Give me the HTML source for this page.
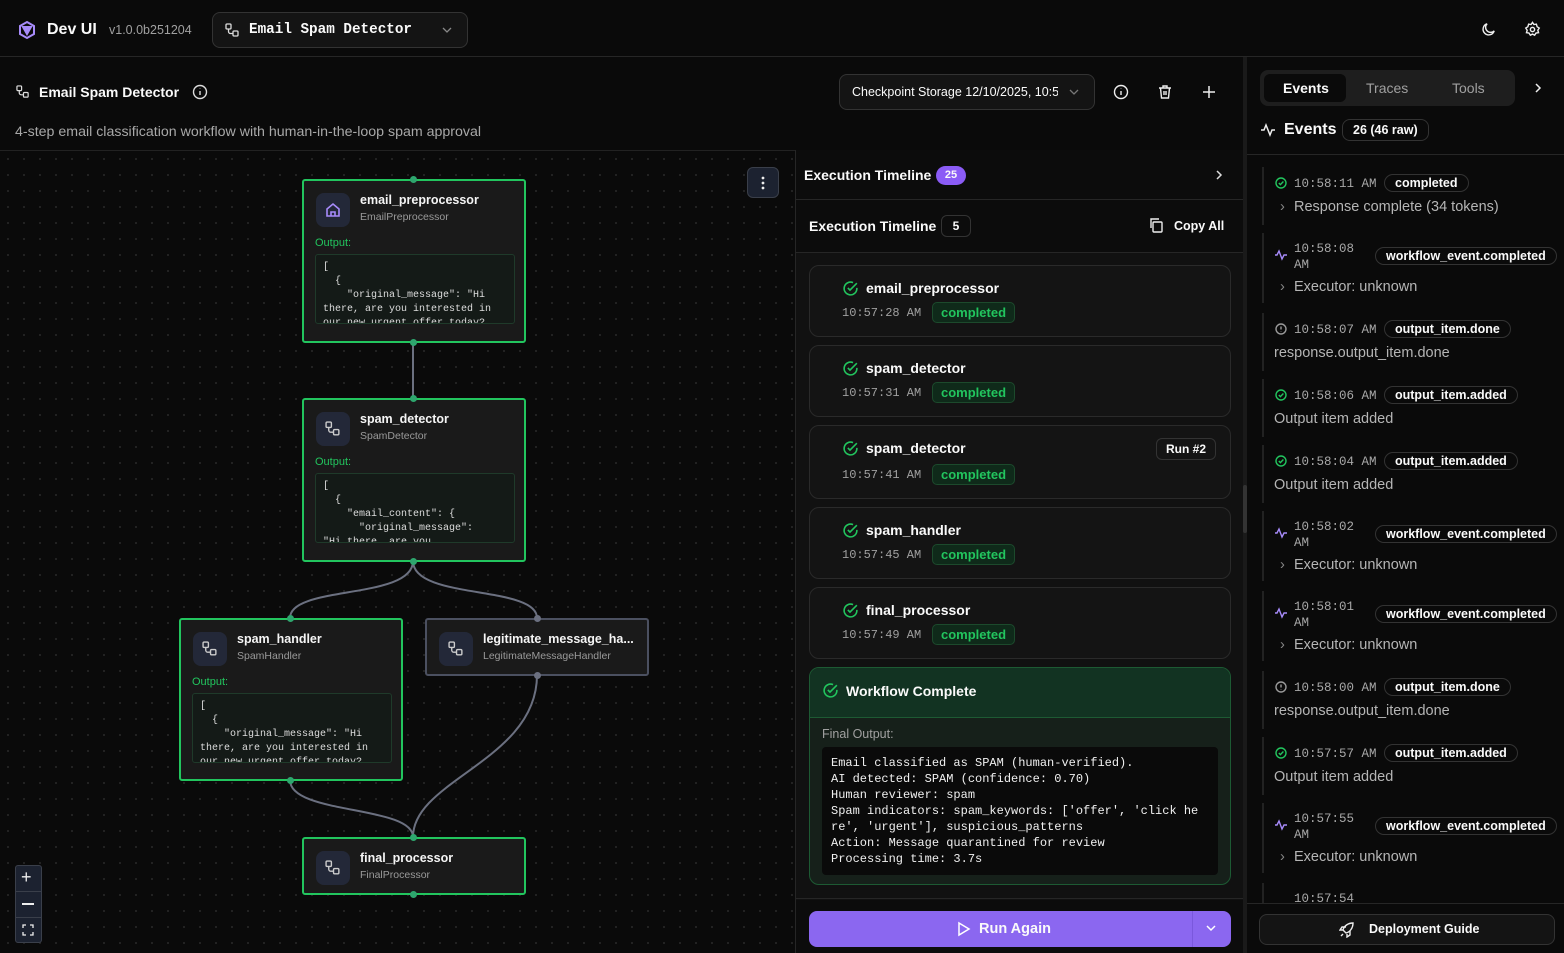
<!DOCTYPE html>
<html><head><meta charset="utf-8">
<style>
*{box-sizing:border-box;margin:0;padding:0}
body{width:1564px;height:953px;background:#0a0a0a;color:#fafafa;font-family:"Liberation Sans",sans-serif;position:relative;overflow:hidden}
.a{position:absolute}
.mono{font-family:"Liberation Mono",monospace}
.b{font-weight:bold}
.node{position:absolute;background:#1a1a1a;border:2px solid #22c55e;border-radius:3px}
.node.g{border-color:#4b5060}
.ic{position:absolute;left:12px;top:12px;width:34px;height:34px;border-radius:8px;background:#232838}
.nt{position:absolute;left:56px;top:12px;font-size:12.5px;font-weight:bold;color:#f5f5f5}
.ns{position:absolute;left:56px;top:30px;font-size:10.5px;color:#9a9a9a}
.out{position:absolute;left:11px;top:56px;font-size:11px;color:#22c55e}
.code{position:absolute;left:11px;top:73px;width:200px;height:70px;border:1px solid #1f3a2a;background:#141a17;border-radius:3px;overflow:hidden;font-family:"Liberation Mono",monospace;font-size:10px;line-height:14px;padding:6px 7px;white-space:pre;color:#ddd}
.dot{position:absolute;width:7px;height:7px;border-radius:50%;background:#2ea66e}
.card{position:absolute;left:809px;width:422px;border:1px solid #2a2a2a;border-radius:10px;background:#141414}
.card .t{position:absolute;left:56px;top:14px;font-size:14px;font-weight:bold}
.card .tm{position:absolute;left:32px;top:40px;font-family:"Liberation Mono",monospace;font-size:12px;color:#a0a0a0}
.pill{position:absolute;left:122px;top:36px;padding:2px 8px;font-size:13px;font-weight:bold;color:#22c55e;background:#0f2a1a;border:1px solid #1c4a2c;border-radius:5px}
.ev{position:absolute;left:1262px;width:300px;border-left:2px solid #222}
.ev .tm{position:absolute;left:30px;font-family:"Liberation Mono",monospace;font-size:12.5px;color:#a8a8a8;line-height:16px}
.ev .tag{position:absolute;padding:1px 10px;border:1px solid #333;border-radius:10px;font-size:12.5px;font-weight:bold;background:#0a0a0a;white-space:nowrap}
.ev .d{position:absolute;font-size:14.5px;color:#b5b5b5;white-space:nowrap}
</style></head><body>
<div class="a" style="left:0;top:0;width:1564px;height:57px;border-bottom:1px solid #262626"></div>
<svg class="a" style="left:17px;top:20px" width="20" height="20" viewBox="0 0 20 20" fill="none" stroke="#a78bfa" stroke-width="2"><path d="M10 2l7 4v8l-7 4-7-4V6z"/><path d="M6 7h8l-4 7z" fill="#a78bfa"/></svg>
<div class="a b" style="left:47px;top:21px;font-size:16px">Dev UI</div>
<div class="a" style="left:109px;top:23px;font-size:12.5px;color:#a0a0a0">v1.0.0b251204</div>
<div class="a" style="left:212px;top:12px;width:256px;height:36px;border:1px solid #333;border-radius:8px;background:#141414"></div>
<svg class="a" style="left:225px;top:23px" width="15" height="15" viewBox="0 0 15 15" fill="none" stroke="#ddd" stroke-width="1.3"><rect x="1" y="1" width="5" height="5" rx="1"/><rect x="8" y="8" width="5" height="5" rx="1"/><path d="M3.5 6v2.5a2 2 0 0 0 2 2H8"/></svg>
<div class="a mono b" style="left:249px;top:22px;font-size:14.3px">Email Spam Detector</div>
<svg class="a" style="left:441px;top:25px" width="12" height="10" viewBox="0 0 12 10" fill="none" stroke="#888" stroke-width="1.3"><path d="M2 3l4 4 4-4"/></svg>
<svg class="a" style="left:1480px;top:21px" width="17" height="17" viewBox="0 0 24 24" fill="none" stroke="#eee" stroke-width="2"><path d="M20 14A8 8 0 1 1 10 4a6 6 0 0 0 10 10z"/></svg>
<svg class="a" style="left:1524px;top:21px" width="17" height="17" viewBox="0 0 24 24" fill="none" stroke="#eee" stroke-width="2"><circle cx="12" cy="12" r="3"/><path d="M12 2l2 3 3.5-.5 1 3.5 3 2-2 3 1 3.5-3.5.5-2 3-3-1.5-3 1.5-2-3-3.5-.5 1-3.5-2-3 3-2 1-3.5L10 5z"/></svg>

<svg class="a" style="left:16px;top:85px" width="14" height="14" viewBox="0 0 15 15" fill="none" stroke="#ddd" stroke-width="1.3"><rect x="1" y="1" width="5" height="5" rx="1"/><rect x="8" y="8" width="5" height="5" rx="1"/><path d="M3.5 6v2.5a2 2 0 0 0 2 2H8"/></svg>
<div class="a b" style="left:39px;top:84px;font-size:14px">Email Spam Detector</div>
<svg class="a" style="left:192px;top:84px" width="16" height="16" viewBox="0 0 16 16" fill="none" stroke="#ddd" stroke-width="1.4"><circle cx="8" cy="8" r="6.5"/><path d="M8 7v4M8 4.6v.4"/></svg>
<div class="a" style="left:15px;top:124px;font-size:14.2px;color:#a8a8a8">4-step email classification workflow with human-in-the-loop spam approval</div>
<div class="a" style="left:839px;top:74px;width:256px;height:36px;border:1px solid #333;border-radius:8px;background:#141414;overflow:hidden"><div class="a" style="left:12px;top:10px;font-size:12.5px;white-space:nowrap;width:206px;overflow:hidden">Checkpoint Storage 12/10/2025, 10:58</div></div>
<svg class="a" style="left:1068px;top:87px" width="12" height="10" viewBox="0 0 12 10" fill="none" stroke="#777" stroke-width="1.3"><path d="M2 3l4 4 4-4"/></svg>
<svg class="a" style="left:1113px;top:84px" width="16" height="16" viewBox="0 0 16 16" fill="none" stroke="#eee" stroke-width="1.4"><circle cx="8" cy="8" r="6.5"/><path d="M8 7v4M8 4.6v.4"/></svg>
<svg class="a" style="left:1157px;top:84px" width="16" height="16" viewBox="0 0 16 16" fill="none" stroke="#eee" stroke-width="1.4"><path d="M2 4h12M6 4V2h4v2M3.5 4l1 10h7l1-10M7 7v4M9 7v4"/></svg>
<svg class="a" style="left:1201px;top:84px" width="16" height="16" viewBox="0 0 16 16" fill="none" stroke="#eee" stroke-width="1.5"><path d="M8 2v12M2 8h12"/></svg>

<div class="a" style="left:0;top:150px;width:795px;height:803px;border-top:1px solid #222;background-color:#0a0a0a;background-image:radial-gradient(#2a2a2a 1px,transparent 1px);background-size:16px 16px"></div>
<div class="a" style="left:795px;top:150px;width:1px;height:803px;background:#262626"></div>
<div class="a" style="left:747px;top:167px;width:32px;height:31px;border:1px solid #3a3f4a;border-radius:6px;background:#1c2230"></div>
<svg class="a" style="left:759px;top:175px" width="8" height="16"><circle cx="4" cy="3" r="1.4" fill="#eee"/><circle cx="4" cy="8" r="1.4" fill="#eee"/><circle cx="4" cy="13" r="1.4" fill="#eee"/></svg>

<svg class="a" style="left:0;top:0" width="795" height="953" fill="none" stroke="#6b7080" stroke-width="2">
<path d="M413 342V398"/>
<path d="M413 561C413 600 290 585 290 618"/>
<path d="M413 561C413 600 537 585 537 618"/>
<path d="M290 780C290 815 413 805 413 837"/>
<path d="M537 675C537 760 413 780 413 837"/>
</svg>

<div class="node" style="left:302px;top:179px;width:224px;height:164px">
<div class="ic"><svg style="margin:9px" width="16" height="16" viewBox="0 0 16 16" fill="none" stroke="#a78bfa" stroke-width="1.6"><path d="M2 7l6-5 6 5v7H2z"/><path d="M6 14v-4h4v4"/></svg></div>
<div class="nt">email_preprocessor</div><div class="ns">EmailPreprocessor</div>
<div class="out">Output:</div>
<div class="code">[
  {
    "original_message": "Hi
there, are you interested in
our new urgent offer today?</div></div>
<div class="node" style="left:302px;top:398px;width:224px;height:164px">
<div class="ic"><svg style="margin:9px" width="16" height="16" viewBox="0 0 15 15" fill="none" stroke="#ccc" stroke-width="1.3"><rect x="1" y="1" width="5" height="5" rx="1"/><rect x="8" y="8" width="5" height="5" rx="1"/><path d="M3.5 6v2.5a2 2 0 0 0 2 2H8"/></svg></div>
<div class="nt">spam_detector</div><div class="ns">SpamDetector</div>
<div class="out">Output:</div>
<div class="code">[
  {
    "email_content": {
      "original_message":
"Hi there, are you</div></div>
<div class="node" style="left:179px;top:618px;width:224px;height:163px">
<div class="ic"><svg style="margin:9px" width="16" height="16" viewBox="0 0 15 15" fill="none" stroke="#ccc" stroke-width="1.3"><rect x="1" y="1" width="5" height="5" rx="1"/><rect x="8" y="8" width="5" height="5" rx="1"/><path d="M3.5 6v2.5a2 2 0 0 0 2 2H8"/></svg></div>
<div class="nt">spam_handler</div><div class="ns">SpamHandler</div>
<div class="out">Output:</div>
<div class="code">[
  {
    "original_message": "Hi
there, are you interested in
our new urgent offer today?</div></div>
<div class="node g" style="left:425px;top:618px;width:224px;height:58px">
<div class="ic"><svg style="margin:9px" width="16" height="16" viewBox="0 0 15 15" fill="none" stroke="#ccc" stroke-width="1.3"><rect x="1" y="1" width="5" height="5" rx="1"/><rect x="8" y="8" width="5" height="5" rx="1"/><path d="M3.5 6v2.5a2 2 0 0 0 2 2H8"/></svg></div>
<div class="nt">legitimate_message_ha...</div><div class="ns">LegitimateMessageHandler</div></div>
<div class="node" style="left:302px;top:837px;width:224px;height:58px">
<div class="ic"><svg style="margin:9px" width="16" height="16" viewBox="0 0 15 15" fill="none" stroke="#ccc" stroke-width="1.3"><rect x="1" y="1" width="5" height="5" rx="1"/><rect x="8" y="8" width="5" height="5" rx="1"/><path d="M3.5 6v2.5a2 2 0 0 0 2 2H8"/></svg></div>
<div class="nt">final_processor</div><div class="ns">FinalProcessor</div></div>
<div class="dot" style="left:410px;top:176px"></div><div class="dot" style="left:410px;top:339px"></div>
<div class="dot" style="left:410px;top:395px"></div><div class="dot" style="left:410px;top:558px"></div>
<div class="dot" style="left:287px;top:615px"></div><div class="dot" style="left:287px;top:777px"></div>
<div class="dot" style="left:534px;top:615px;background:#6b7080"></div><div class="dot" style="left:534px;top:672px;background:#6b7080"></div>
<div class="dot" style="left:410px;top:834px"></div><div class="dot" style="left:410px;top:891px"></div>

<div class="a" style="left:15px;top:865px;width:27px;height:78px;border:1px solid #3a3f4a;border-radius:3px;background:#1c2230"></div>
<div class="a" style="left:15px;top:891px;width:27px;height:1px;background:#3a3f4a"></div>
<div class="a" style="left:15px;top:917px;width:27px;height:1px;background:#3a3f4a"></div>
<div class="a" style="left:21px;top:867px;font-size:18px;color:#eee">+</div>
<div class="a" style="left:22px;top:903px;width:12px;height:1.5px;background:#eee"></div>
<svg class="a" style="left:22px;top:924px" width="12" height="12" fill="none" stroke="#eee" stroke-width="1.3"><path d="M1 4V1h3M8 1h3v3M11 8v3H8M4 11H1V8"/></svg>

<div class="a" style="left:796px;top:150px;width:447px;height:803px;background:#0c0c0c"></div>
<div class="a b" style="left:804px;top:167px;font-size:14px">Execution Timeline</div>
<div class="a b" style="left:936px;top:166px;width:30px;height:19px;border-radius:10px;background:#8b5cf6;font-size:11px;text-align:center;line-height:19px">25</div>
<svg class="a" style="left:1213px;top:168px" width="12" height="14" fill="none" stroke="#ddd" stroke-width="1.5"><path d="M4 3l4 4-4 4"/></svg>
<div class="a" style="left:796px;top:199px;width:447px;height:1px;background:#262626"></div>
<div class="a b" style="left:809px;top:218px;font-size:14px">Execution Timeline</div>
<div class="a b" style="left:941px;top:215px;width:30px;height:22px;border:1px solid #333;border-radius:6px;font-size:12px;text-align:center;line-height:20px">5</div>
<svg class="a" style="left:1148px;top:217px" width="16" height="16" fill="none" stroke="#eee" stroke-width="1.4"><rect x="5" y="5" width="9" height="10" rx="1"/><path d="M3 11V2h8"/></svg>
<div class="a b" style="left:1174px;top:219px;font-size:12.5px">Copy All</div>
<div class="a" style="left:796px;top:252px;width:447px;height:1px;background:#262626"></div>
<div class="a" style="left:796px;top:253px;width:447px;height:647px;background:#111"></div>

<div class="card" style="top:265px;height:72px"><svg class="a" style="left:32px;top:14px" width="17" height="17" viewBox="0 0 16 16" fill="none" stroke="#22c55e" stroke-width="1.5"><path d="M14 7.4V8a6 6 0 1 1-3.6-5.5"/><path d="M5.5 7.5l2 2L14 3"/></svg><div class="t">email_preprocessor</div><div class="tm">10:57:28 AM</div><div class="pill">completed</div></div>
<div class="card" style="top:345px;height:72px"><svg class="a" style="left:32px;top:14px" width="17" height="17" viewBox="0 0 16 16" fill="none" stroke="#22c55e" stroke-width="1.5"><path d="M14 7.4V8a6 6 0 1 1-3.6-5.5"/><path d="M5.5 7.5l2 2L14 3"/></svg><div class="t">spam_detector</div><div class="tm">10:57:31 AM</div><div class="pill">completed</div></div>
<div class="card" style="top:425px;height:74px"><svg class="a" style="left:32px;top:14px" width="17" height="17" viewBox="0 0 16 16" fill="none" stroke="#22c55e" stroke-width="1.5"><path d="M14 7.4V8a6 6 0 1 1-3.6-5.5"/><path d="M5.5 7.5l2 2L14 3"/></svg><div class="t">spam_detector</div><div class="tm" style="top:42px">10:57:41 AM</div><div class="pill" style="top:38px">completed</div><div class="a b" style="left:346px;top:12px;padding:3px 9px;border:1px solid #333;border-radius:6px;font-size:12px">Run #2</div></div>
<div class="card" style="top:507px;height:72px"><svg class="a" style="left:32px;top:14px" width="17" height="17" viewBox="0 0 16 16" fill="none" stroke="#22c55e" stroke-width="1.5"><path d="M14 7.4V8a6 6 0 1 1-3.6-5.5"/><path d="M5.5 7.5l2 2L14 3"/></svg><div class="t">spam_handler</div><div class="tm">10:57:45 AM</div><div class="pill">completed</div></div>
<div class="card" style="top:587px;height:72px"><svg class="a" style="left:32px;top:14px" width="17" height="17" viewBox="0 0 16 16" fill="none" stroke="#22c55e" stroke-width="1.5"><path d="M14 7.4V8a6 6 0 1 1-3.6-5.5"/><path d="M5.5 7.5l2 2L14 3"/></svg><div class="t">final_processor</div><div class="tm">10:57:49 AM</div><div class="pill">completed</div></div>

<div class="a" style="left:809px;top:667px;width:422px;height:218px;border:1px solid #1d5a33;border-radius:10px;background:#16201a;overflow:hidden">
<div class="a" style="left:0;top:0;width:422px;height:50px;background:#123322;border-bottom:1px solid #1d5a33"></div>
<svg class="a" style="left:12px;top:14px" width="17" height="17" viewBox="0 0 16 16" fill="none" stroke="#22c55e" stroke-width="1.5"><path d="M14 7.4V8a6 6 0 1 1-3.6-5.5"/><path d="M5.5 7.5l2 2L14 3"/></svg>
<div class="a b" style="left:36px;top:15px;font-size:14px">Workflow Complete</div>
<div class="a" style="left:12px;top:59px;font-size:12.5px;color:#a0a0a0">Final Output:</div>
<div class="a mono" style="left:12px;top:79px;width:396px;height:128px;background:#0a0a0a;border-radius:4px;padding:8px 9px;font-size:12px;line-height:16px;white-space:pre;color:#f0f0f0">Email classified as SPAM (human-verified).
AI detected: SPAM (confidence: 0.70)
Human reviewer: spam
Spam indicators: spam_keywords: ['offer', 'click he
re', 'urgent'], suspicious_patterns
Action: Message quarantined for review
Processing time: 3.7s</div></div>
<div class="a" style="left:796px;top:898px;width:447px;height:1px;background:#262626"></div>
<div class="a" style="left:809px;top:911px;width:422px;height:36px;border-radius:8px;background:#8b67f0"></div>
<div class="a" style="left:1192px;top:911px;width:1px;height:36px;background:#7a58dd"></div>
<svg class="a" style="left:956px;top:921px" width="15" height="16" fill="none" stroke="#fff" stroke-width="1.5"><path d="M3 2l10 6-10 6z"/></svg>
<div class="a b" style="left:979px;top:921px;font-size:14.5px">Run Again</div>
<svg class="a" style="left:1205px;top:923px" width="12" height="10" fill="none" stroke="#fff" stroke-width="1.5"><path d="M2 3l4 4 4-4"/></svg>

<div class="a" style="left:1243px;top:57px;width:4px;height:896px;background:#1a1a1a"></div>
<div class="a" style="left:1243px;top:485px;width:4px;height:48px;background:#333;border-radius:2px"></div>

<div class="a" style="left:1260px;top:70px;width:255px;height:36px;border-radius:8px;background:#1e1e1e"></div>
<div class="a" style="left:1264px;top:74px;width:82px;height:28px;border-radius:6px;background:#0a0a0a"></div>
<div class="a b" style="left:1283px;top:80px;font-size:14px">Events</div>
<div class="a" style="left:1366px;top:80px;font-size:14px;color:#a0a0a0">Traces</div>
<div class="a" style="left:1452px;top:80px;font-size:14px;color:#a0a0a0">Tools</div>
<svg class="a" style="left:1532px;top:81px" width="12" height="14" fill="none" stroke="#eee" stroke-width="1.5"><path d="M4 3l4 4-4 4"/></svg>
<svg class="a" style="left:1260px;top:122px" width="16" height="16" fill="none" stroke="#eee" stroke-width="1.5"><path d="M1 8h3l2-5 4 10 2-5h3"/></svg>
<div class="a b" style="left:1284px;top:121px;font-size:16px">Events</div>
<div class="a b" style="left:1342px;top:119px;padding:3px 10px;border:1px solid #333;border-radius:8px;font-size:12.5px">26 (46 raw)</div>
<div class="a" style="left:1247px;top:154px;width:317px;height:1px;background:#262626"></div>

<div class="ev" style="top:167px;height:58px"><svg class="a" style="left:11px;top:10px" width="12" height="12" fill="none" stroke="#22c55e" stroke-width="1.4"><circle cx="6" cy="6" r="5"/><path d="M3.8 6l1.6 1.6L8.4 4.5"/></svg><div class="tm" style="top:9px">10:58:11 AM</div><div class="tag" style="left:120px;top:7px">completed</div><div class="d" style="left:16px;top:32px;color:#888">›</div><div class="d" style="left:30px;top:32px">Response complete (34 tokens)</div></div>
<div class="ev" style="top:233px;height:70px"><svg class="a" style="left:11px;top:16px" width="12" height="12" fill="none" stroke="#a78bfa" stroke-width="1.4"><path d="M0 6h2l2-4 3 8 2-4h3"/></svg><div class="tm" style="top:8px">10:58:08<br>AM</div><div class="tag" style="left:111px;top:14px">workflow_event.completed</div><div class="d" style="left:16px;top:46px;color:#888">›</div><div class="d" style="left:30px;top:46px">Executor: unknown</div></div>
<div class="ev" style="top:313px;height:58px"><svg class="a" style="left:11px;top:10px" width="12" height="12" fill="none" stroke="#999" stroke-width="1.4"><circle cx="6" cy="6" r="5"/><path d="M6 3.5v3M6 8.3v.3"/></svg><div class="tm" style="top:9px">10:58:07 AM</div><div class="tag" style="left:120px;top:7px">output_item.done</div><div class="d" style="left:10px;top:32px">response.output_item.done</div></div>
<div class="ev" style="top:379px;height:58px"><svg class="a" style="left:11px;top:10px" width="12" height="12" fill="none" stroke="#22c55e" stroke-width="1.4"><circle cx="6" cy="6" r="5"/><path d="M3.8 6l1.6 1.6L8.4 4.5"/></svg><div class="tm" style="top:9px">10:58:06 AM</div><div class="tag" style="left:120px;top:7px">output_item.added</div><div class="d" style="left:10px;top:32px">Output item added</div></div>
<div class="ev" style="top:445px;height:58px"><svg class="a" style="left:11px;top:10px" width="12" height="12" fill="none" stroke="#22c55e" stroke-width="1.4"><circle cx="6" cy="6" r="5"/><path d="M3.8 6l1.6 1.6L8.4 4.5"/></svg><div class="tm" style="top:9px">10:58:04 AM</div><div class="tag" style="left:120px;top:7px">output_item.added</div><div class="d" style="left:10px;top:32px">Output item added</div></div>
<div class="ev" style="top:511px;height:70px"><svg class="a" style="left:11px;top:16px" width="12" height="12" fill="none" stroke="#a78bfa" stroke-width="1.4"><path d="M0 6h2l2-4 3 8 2-4h3"/></svg><div class="tm" style="top:8px">10:58:02<br>AM</div><div class="tag" style="left:111px;top:14px">workflow_event.completed</div><div class="d" style="left:16px;top:46px;color:#888">›</div><div class="d" style="left:30px;top:46px">Executor: unknown</div></div>
<div class="ev" style="top:591px;height:70px"><svg class="a" style="left:11px;top:16px" width="12" height="12" fill="none" stroke="#a78bfa" stroke-width="1.4"><path d="M0 6h2l2-4 3 8 2-4h3"/></svg><div class="tm" style="top:8px">10:58:01<br>AM</div><div class="tag" style="left:111px;top:14px">workflow_event.completed</div><div class="d" style="left:16px;top:46px;color:#888">›</div><div class="d" style="left:30px;top:46px">Executor: unknown</div></div>
<div class="ev" style="top:671px;height:58px"><svg class="a" style="left:11px;top:10px" width="12" height="12" fill="none" stroke="#999" stroke-width="1.4"><circle cx="6" cy="6" r="5"/><path d="M6 3.5v3M6 8.3v.3"/></svg><div class="tm" style="top:9px">10:58:00 AM</div><div class="tag" style="left:120px;top:7px">output_item.done</div><div class="d" style="left:10px;top:32px">response.output_item.done</div></div>
<div class="ev" style="top:737px;height:58px"><svg class="a" style="left:11px;top:10px" width="12" height="12" fill="none" stroke="#22c55e" stroke-width="1.4"><circle cx="6" cy="6" r="5"/><path d="M3.8 6l1.6 1.6L8.4 4.5"/></svg><div class="tm" style="top:9px">10:57:57 AM</div><div class="tag" style="left:120px;top:7px">output_item.added</div><div class="d" style="left:10px;top:32px">Output item added</div></div>
<div class="ev" style="top:803px;height:70px"><svg class="a" style="left:11px;top:16px" width="12" height="12" fill="none" stroke="#a78bfa" stroke-width="1.4"><path d="M0 6h2l2-4 3 8 2-4h3"/></svg><div class="tm" style="top:8px">10:57:55<br>AM</div><div class="tag" style="left:111px;top:14px">workflow_event.completed</div><div class="d" style="left:16px;top:46px;color:#888">›</div><div class="d" style="left:30px;top:46px">Executor: unknown</div></div>
<div class="ev" style="top:883px;height:40px"><div class="tm" style="top:8px">10:57:54</div></div>
<div class="a" style="left:1247px;top:903px;width:317px;height:50px;background:#0a0a0a;border-top:1px solid #262626"></div>
<div class="a" style="left:1259px;top:914px;width:296px;height:31px;border:1px solid #333;border-radius:8px;background:#141414"></div>
<svg class="a" style="left:1339px;top:922px" width="16" height="16" fill="none" stroke="#eee" stroke-width="1.4"><path d="M6 10l-2-2c1-4 5-7 10-7 0 5-3 9-7 10zM4 8H1l2-3h4M8 12v3l3-2V9M4 12l-2 2"/></svg>
<div class="a b" style="left:1369px;top:922px;font-size:12.5px">Deployment Guide</div>
</body></html>
